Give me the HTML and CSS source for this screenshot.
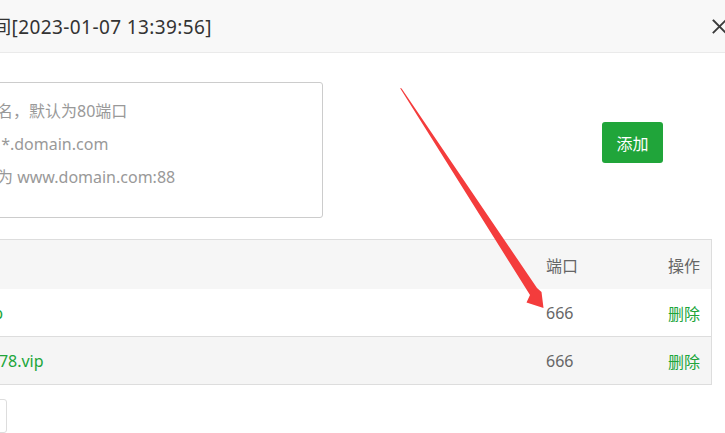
FILE: index.html
```html
<!DOCTYPE html>
<html lang="zh-CN">
<head>
<meta charset="utf-8">
<title>站点修改</title>
<link rel="stylesheet" href="styles.css">
</head>
<body>
<div class="modal">
  <div class="modal-head">
    <span class="modal-title">添加时间[2023-01-07 13:39:56]</span>
    <span class="modal-close" aria-label="关闭">
      <svg width="15" height="15" viewBox="0 0 15 15"><path d="M1.5 1.5 L13.5 13.5 M13.5 1.5 L1.5 13.5" stroke="#3a3a3a" stroke-width="1.9" fill="none" stroke-linecap="square"/></svg>
    </span>
  </div>
  <div class="modal-body">
    <div class="form-row">
      <div class="domain-input">
        <div class="ph">每行填写一个域名，默认为80端口</div>
        <div class="ph">泛解析添加方法 *.domain.com</div>
        <div class="ph">如另加端口格式为 www.domain.com:88</div>
      </div>
      <button class="btn-add">添加</button>
    </div>
    <div class="tbl">
      <div class="tr thead">
        <div class="c-domain">域名</div>
        <div class="c-port">端口</div>
        <div class="c-op">操作</div>
      </div>
      <div class="tr">
        <div class="c-domain link">www.bt-666.vip</div>
        <div class="c-port">666</div>
        <div class="c-op link">删除</div>
      </div>
      <div class="tr odd">
        <div class="c-domain link">www.bt12345678.vip</div>
        <div class="c-port">666</div>
        <div class="c-op link">删除</div>
      </div>
    </div>
    <div class="pager"></div>
  </div>
</div>
<svg class="annot" width="725" height="433" viewBox="0 0 725 433">
  <polygon points="400,88 401.6,88.4 537,288 541.5,292 543.5,308 526.5,302.5 530,295" fill="#f43c3c"/>
</svg>
</body>
</html>
```

FILE: styles.css
```css
html, body {
  margin: 0;
  padding: 0;
  background: #fff;
  overflow: hidden;
  width: 725px;
  height: 433px;
}
body {
  font-family: "Noto Sans", "Noto Sans CJK SC", sans-serif;
  color: #333;
  position: relative;
}
.modal {
  margin-left: -150px;
  width: 882px;
}
.modal-head {
  display: flex;
  align-items: center;
  height: 52px;
  background: #f8f8f8;
  border-bottom: 1px solid #eaeaea;
  padding-left: 84px;
  padding-right: 5px;
}
.modal-title {
  font-size: 19px;
  letter-spacing: 0.4px;
  color: #333;
  white-space: nowrap;
}
.modal-close {
  margin-left: auto;
  display: flex;
  width: 15px;
  height: 15px;
}
.modal-body {
  padding: 29px 20px 0 20px;
}
.form-row {
  display: flex;
  align-items: flex-start;
}
.domain-input {
  box-sizing: border-box;
  width: 453px;
  height: 136px;
  border: 1px solid #ccc;
  border-radius: 3px;
  padding: 12px 0 0 14px;
  font-size: 16px;
  line-height: 33px;
  color: #999;
  white-space: nowrap;
}
.btn-add {
  margin-left: auto;
  margin-right: 49px;
  margin-top: 40px;
  width: 61px;
  height: 41px;
  border: none;
  border-radius: 3px;
  background: #20a53a;
  color: #fff;
  font-family: "Noto Sans CJK SC", sans-serif;
  font-size: 16px;
  padding: 0;
}
.tbl {
  margin-top: 21px;
  border: 1px solid #ddd;
  font-size: 16px;
  color: #666;
}
.tr {
  display: flex;
  align-items: center;
  height: 47px;
  background: #fff;
}
.thead {
  height: 49px;
  background: #f6f6f6;
}
.odd {
  background: #f5f5f5;
  border-top: 1px solid #ddd;
}
.c-domain {
  flex: 1;
  padding-left: 16px;
  white-space: nowrap;
}
.c-port {
  width: 86px;
}
.c-op {
  box-sizing: border-box;
  width: 79px;
  padding-right: 11px;
  text-align: right;
}
.link {
  color: #20a53a;
}
.pager {
  margin-top: 14px;
  width: 137px;
  height: 34px;
  box-sizing: border-box;
  border: 1px solid #ddd;
  border-radius: 3px;
}
.annot {
  position: absolute;
  left: 0;
  top: 0;
  pointer-events: none;
}
```
